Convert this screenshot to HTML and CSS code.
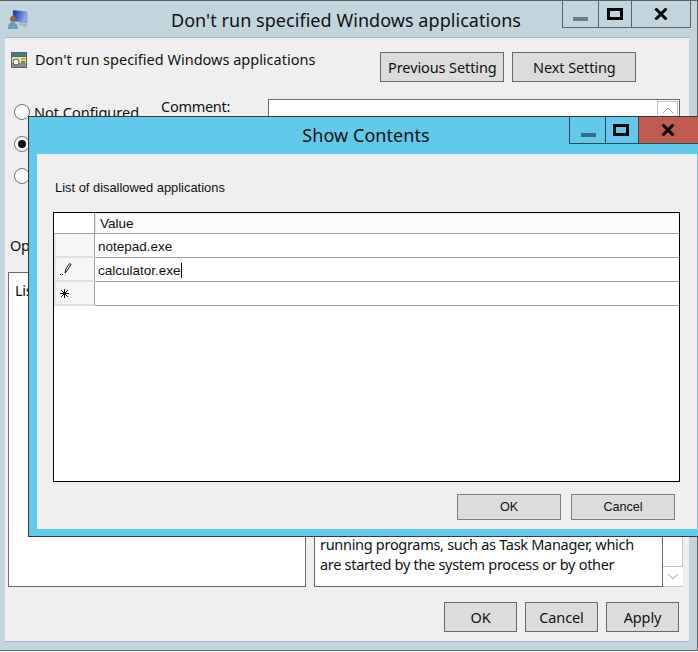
FILE: index.html
```html
<!DOCTYPE html>
<html lang="en">
<head>
  <meta charset="UTF-8" />
  <title>Don't run specified Windows applications</title>
  <link rel="stylesheet" href="styles.css">
</head>
<body>
<div class="window">
  <div class="titlebar">
    <svg class="app-icon" width="20" height="20" viewBox="0 0 20 20">
      <defs>
        <linearGradient id="screen" x1="0" y1="0" x2="1" y2="0.300">
          <stop offset="0" stop-color="#0e2a9a"/>
          <stop offset="1" stop-color="#8fabec"/>
        </linearGradient>
      </defs>
      <path d="M5 0l14 2v11l-14-2z" fill="url(#screen)" stroke="#7f8ea6" stroke-width="0.600"/>
      <path d="M10 13l9 1 0 3-6-1z" fill="#aab6bd"/>
      <circle cx="5" cy="9" r="3" fill="#8f6a4a"/>
      <path d="M0 19c0-5 2-7 4.500-7S10 14 10 19z" fill="#6d9cb8"/>
    </svg>
    <div class="title">Don't run specified Windows applications</div>
    <div class="controls">
      <div class="ctl ctl-min"><span class="dash"></span></div>
      <div class="ctl ctl-max"><span class="box"></span></div>
      <div class="ctl ctl-close">
        <svg width="14" height="12" viewBox="0 0 14 12"><path d="M1.500 0.500L12.500 11.500M12.500 0.500L1.500 11.500" stroke="#000" stroke-width="3" fill="none"/></svg>
      </div>
    </div>
  </div>

  <div class="panel">
    <div class="head">
      <svg class="policy-icon" width="16" height="16" viewBox="0 0 16 16">
        <rect x="0" y="0" width="16" height="16" fill="#56666a"/>
        <rect x="1" y="1" width="14" height="3" fill="#3d7f8c"/>
        <rect x="1" y="5" width="14" height="10" fill="#ecdf9e"/>
        <rect x="1" y="11" width="14" height="4" fill="#8d8f7a"/>
        <circle cx="5" cy="10" r="3" fill="#fff" stroke="#555" stroke-width="1"/>
        <rect x="10" y="6" width="4" height="2" fill="#c9a83a"/>
        <rect x="10" y="9" width="4" height="2" fill="#7a7a5a"/>
      </svg>
      <span class="head-label">Don't run specified Windows applications</span>
      <div class="head-btns">
        <button class="btn btn-nav">Previous Setting</button>
        <button class="btn btn-nav">Next Setting</button>
      </div>
    </div>

    <div class="state">
      <div class="radios">
        <div class="radio-row"><span class="radio"></span>Not Configured</div>
        <div class="radio-row"><span class="radio on"></span></div>
        <div class="radio-row"><span class="radio"></span></div>
      </div>
      <div class="comment-label">Comment:</div>
      <div class="comment-box">
        <div class="scroll">
          <svg width="12" height="7" viewBox="0 0 12 7"><path d="M1 6l5-5 5 5" stroke="#a0a0a0" fill="none"/></svg>
        </div>
      </div>
    </div>

    <div class="labels">Options:</div>

    <div class="panes">
      <div class="pane-options">List of disallowed applications</div>
      <div class="pane-help">
        <div class="help-text">
          running programs, such as Task Manager, which<br>
          are started by the system process or by other
        </div>
        <div class="help-track">
          <div class="scroll scroll-help">
            <svg width="12" height="7" viewBox="0 0 12 7"><path d="M1 1l5 5 5-5" stroke="#a0a0a0" fill="none"/></svg>
          </div>
        </div>
      </div>
    </div>

    <div class="foot">
      <button class="btn btn-foot">OK</button>
      <button class="btn btn-foot">Cancel</button>
      <button class="btn btn-foot">Apply</button>
    </div>
  </div>

  <!-- dialog sits on top of the policy window -->
  <div class="dialog">
    <div class="dialog-bar">
      <div class="dialog-title">Show Contents</div>
      <div class="controls controls-dialog">
        <div class="ctl ctl-min"><span class="dash"></span></div>
        <div class="ctl ctl-max"><span class="box"></span></div>
        <div class="ctl ctl-close">
          <svg width="14" height="12" viewBox="0 0 14 12"><path d="M1.500 0.500L12.500 11.500M12.500 0.500L1.500 11.500" stroke="#000" stroke-width="3" fill="none"/></svg>
        </div>
      </div>
    </div>
    <div class="dialog-body">
      <div class="list-label">List of disallowed applications</div>
      <div class="grid">
        <div class="rowhead corner"></div>
        <div class="colhead">Value</div>

        <div class="rowhead"></div>
        <div class="cell">notepad.exe</div>

        <div class="rowhead">
          <svg width="13" height="14" viewBox="0 0 13 14">
            <path d="M5 11l1-4 3.500-5.500 1.500 1-3.500 5.500z" fill="#fff" stroke="#000" stroke-width="0.900"/>
            <path d="M0 12.500h1M2 12.500h1" stroke="#000"/>
          </svg>
        </div>
        <div class="cell">calculator.exe<span class="caret"></span></div>

        <div class="rowhead">
          <svg width="9" height="9" viewBox="0 0 9 9"><path d="M4.500 0v9M0 4.500h9M1.200 1.200l6.600 6.600M7.800 1.200l-6.600 6.600" stroke="#000" fill="none"/></svg>
        </div>
        <div class="cell"></div>
      </div>
      <div class="dialog-foot">
        <button class="btn btn-dialog">OK</button>
        <button class="btn btn-dialog">Cancel</button>
      </div>
    </div>
  </div>
</div>
</body>
</html>
```

FILE: styles.css
```css
:root {
  --frame: #c3d5dc;
  --panel: #efefef;
  --line: #696969;
  --sky: #63c9eb;
  --ink: #111;
}

* { box-sizing: border-box; margin: 0; padding: 0; }

body {
  font-family: "Noto Sans", sans-serif;
  background: #fff;
  color: var(--ink);
  overflow: hidden;
}

.window {
  position: relative;
  width: 698px;
  height: 651px;
  background: var(--frame);
  border-top: 1px solid #5c6268;
  border-right: 1px solid #5c6268;
  border-bottom: 1px solid #5c6268;
  display: flex;
  flex-direction: column;
}

.titlebar {
  height: 36px;
  display: flex;
  align-items: flex-start;
  position: relative;
  flex: none;
}

.app-icon { margin: 9px 0 0 8px; }

.title {
  flex: 1;
  text-align: center;
  font-size: 18px;
  line-height: 24px;
  padding-top: 7px;
  margin-left: -33px;
  letter-spacing: 0.05px;
}

/* window buttons */
.controls {
  position: absolute;
  top: 0;
  right: 6px;
  width: 129px;
  height: 27px;
  display: flex;
  border: 1px solid #5c6268;
  border-top: none;
}

.ctl {
  display: flex;
  justify-content: center;
  position: relative;
}

.ctl-min { width: 36px; border-right: 1px solid #5c6268; }
.ctl-max { width: 33px; border-right: 1px solid #5c6268; padding-right: 1px; }
.ctl-close { flex: 1; }

.dash {
  width: 15px;
  height: 4px;
  margin-top: 16px;
  background: #707c82;
}

.box {
  width: 16px;
  height: 12px;
  margin-top: 7px;
  border: 3px solid #000;
}

.ctl-close svg { margin-top: 7px; }

.panel {
  margin: 0 8px 8px 5px;
  flex: 1;
  background: var(--panel);
  border-top: 1px solid #a9b5ba;
  border-bottom: 1px solid #a9b5ba;
  display: flex;
  flex-direction: column;
  font-size: 14.500px;
  letter-spacing: -0.28px;
}

.head {
  display: flex;
  align-items: flex-start;
  height: 61px;
  padding: 14px 0 0 6px;
}

.policy-icon { flex: none; }

.head-label {
  margin-left: 8px;
  line-height: 14px;
  letter-spacing: 0;
}

.head-btns {
  margin-left: 65px;
  display: flex;
  gap: 8px;
}

.btn {
  font-family: "Noto Sans", sans-serif;
  font-size: 14.500px;
  letter-spacing: -0.1px;
  color: var(--ink);
  background: #dcdcdc;
  border: 1px solid var(--line);
}

.btn-nav { width: 124px; height: 30px; }

.state {
  display: flex;
  height: 135px;
}

.radios {
  width: 147px;
  padding: 5px 0 0 9px;
  display: flex;
  flex-direction: column;
  gap: 16px;
  letter-spacing: 0;
}

.radio-row {
  display: flex;
  align-items: center;
  gap: 4px;
  height: 16px;
}

.radio {
  width: 16px;
  height: 16px;
  border-radius: 50%;
  background: #fff;
  border: 1px solid #707070;
  display: flex;
  align-items: center;
  justify-content: center;
}

.radio.on::after {
  content: "";
  width: 8px;
  height: 8px;
  border-radius: 50%;
  background: #111;
}

.comment-label {
  width: 107px;
  margin-left: 9px;
  line-height: 14px;
}

.comment-box {
  width: 412px;
  height: 90px;
  background: #fff;
  border: 1px solid var(--line);
  display: flex;
  justify-content: flex-end;
  padding: 1px 1px 0 0;
}

.scroll {
  width: 21px;
  height: 18px;
  background: #fff;
  border: 1px solid #c4c4c4;
  display: flex;
  align-items: center;
  justify-content: center;
  flex: none;
}

.labels {
  height: 38px;
  padding: 1px 0 0 5px;
  line-height: 20px;
}

.panes {
  display: flex;
  height: 315px;
  padding-left: 3px;
  gap: 8px;
}

.pane-options {
  width: 298px;
  background: #fff;
  border: 1px solid var(--line);
  padding: 7px 6px;
}

.pane-help {
  width: 369px;
  display: flex;
}

.help-text {
  width: 349px;
  background: #fff;
  border: 1px solid var(--line);
  padding: 261px 5px 0;
  line-height: 20px;
  letter-spacing: -0.3px;
}

.help-track {
  width: 20px;
  background: #fff;
  border-right: 1px solid #c4c4c4;
  border-bottom: 1px solid #c4c4c4;
  display: flex;
  align-items: flex-end;
}

.scroll-help {
  width: 20px;
  height: 20px;
  border-width: 1px 0 0;
}

.foot {
  display: flex;
  justify-content: flex-end;
  gap: 8px;
  padding: 15px 10px 0 0;
}

.btn-foot { width: 73px; height: 30px; }

/* Show Contents dialog */
.dialog {
  position: absolute;
  left: 28px;
  top: 115px;
  width: 670px;
  height: 421px;
  background: var(--sky);
  border: 1px solid #35393d;
  border-right: none;
  display: flex;
  flex-direction: column;
}

.dialog-bar {
  height: 36px;
  flex: none;
  position: relative;
}

.dialog-title {
  text-align: center;
  font-size: 18px;
  line-height: 24px;
  padding-top: 6px;
  padding-left: 5px;
  letter-spacing: 0.05px;
}

.controls-dialog {
  right: 0;
  width: 129px;
  border-color: #2b4a58;
  border-right: none;
}

.controls-dialog .ctl-min,
.controls-dialog .ctl-max { border-color: #2b4a58; }

.controls-dialog .ctl-min { padding-left: 1px; }
.controls-dialog .ctl-max { padding-right: 2px; }
.controls-dialog .ctl-close { background: #c25b50; padding-right: 2px; }
.controls-dialog .dash { background: #2f6f88; }

.dialog-body {
  flex: 1;
  margin: 1px 1px 7px 8px;
  background: var(--panel);
  padding: 26px 16px 0 16px;
  font-family: "Liberation Sans", sans-serif;
  font-size: 12.900px;
}

.list-label {
  height: 32px;
  line-height: 16px;
  padding-left: 2px;
}

.grid {
  display: grid;
  grid-template-columns: 41px 1fr;
  grid-template-rows: 21px 24px 24px 24px;
  align-content: start;
  width: 627px;
  height: 270px;
  background: #fff;
  border: 1px solid #000;
  font-size: 13.500px;
}

.rowhead {
  background: #f6f6f6;
  border-right: 1px solid #a0a0a0;
  border-bottom: 2px solid #e0e0e0;
  box-shadow: inset 2px 0 0 #e6e6e6;
  display: flex;
  align-items: center;
  padding-left: 6px;
}

.corner {
  background: #fff;
  box-shadow: none;
  border-bottom: 1px solid #a0a0a0;
}

.colhead {
  background: #fbfbfb;
  border-bottom: 1px solid #a0a0a0;
  padding: 2px 0 0 5px;
  line-height: 18px;
  box-shadow: inset 1px 1px 0 #e8e8e8;
}

.cell {
  border-bottom: 1px solid #a0a0a0;
  padding: 2px 0 0 3px;
  line-height: 21px;
  display: flex;
  align-items: center;
}

.caret {
  width: 1px;
  height: 15px;
  background: #000;
}

.dialog-foot {
  display: flex;
  justify-content: flex-end;
  gap: 10px;
  padding: 12px 6px 0 0;
}

.btn-dialog {
  width: 104px;
  height: 26px;
  font-family: "Liberation Sans", sans-serif;
  font-size: 12.600px;
  letter-spacing: 0;
  border-color: #7d7d7d;
}
```
